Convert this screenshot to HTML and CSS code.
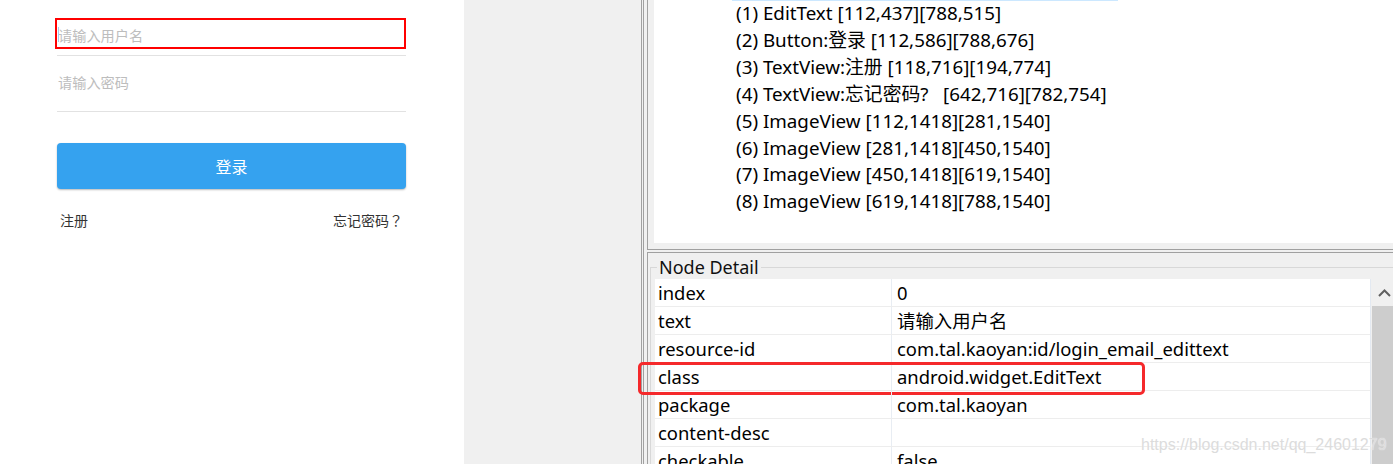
FILE: index.html
```html
<!DOCTYPE html>
<html lang="zh-CN">
<head>
<meta charset="utf-8">
<title>UI Automator Viewer</title>
<link rel="stylesheet" href="styles.css">
</head>
<body>
<div class="page">
  <section class="phone">
    <div class="form">
      <div class="field field-user">
        <span class="cursor"></span>
        <span class="ph">请输入用户名</span>
        <span class="hl-box"></span>
      </div>
      <div class="field field-pass"><span class="ph">请输入密码</span></div>
      <div class="btn">登录</div>
      <div class="links"><span>注册</span><span>忘记密码<span class="q" lang="ja">？</span></span></div>
    </div>
  </section>
  <div class="gap"></div>
  <section class="viewer">
    <div class="tree-pane">
      <div class="tree">
        <div class="sel-edge"></div>
        <ul class="nodes">
          <li>(1) EditText [112,437][788,515]</li>
          <li>(2) Button:登录 [112,586][788,676]</li>
          <li>(3) TextView:注册 [118,716][194,774]</li>
          <li>(4) TextView:忘记密码?   [642,716][782,754]</li>
          <li>(5) ImageView [112,1418][281,1540]</li>
          <li>(6) ImageView [281,1418][450,1540]</li>
          <li>(7) ImageView [450,1418][619,1540]</li>
          <li>(8) ImageView [619,1418][788,1540]</li>
        </ul>
      </div>
    </div>
    <div class="detail-pane">
      <div class="group">
        <span class="legend">Node Detail</span>
        <div class="table-wrap">
          <div class="table">
            <div class="row"><div class="k">index</div><div class="v">0</div></div>
            <div class="row"><div class="k">text</div><div class="v">请输入用户名</div></div>
            <div class="row"><div class="k">resource-id</div><div class="v">com.tal.kaoyan:id/login_email_edittext</div></div>
            <div class="row"><div class="k">class</div><div class="v">android.widget.EditText</div><span class="mark"></span></div>
            <div class="row"><div class="k">package</div><div class="v">com.tal.kaoyan</div></div>
            <div class="row"><div class="k">content-desc</div><div class="v"></div></div>
            <div class="row"><div class="k">checkable</div><div class="v">false</div></div>
          </div>
          <div class="scrollbar">
            <div class="arrow"><svg width="13" height="8" viewBox="0 0 13 8"><path d="M1 7 L6.5 1.5 L12 7" fill="none" stroke="#606060" stroke-width="2"/></svg></div>
            <div class="thumb"></div>
          </div>
        </div>
      </div>
    </div>
  </section>
  <div class="watermark">https://blog.csdn.net/qq_24601279</div>
</div>
</body>
</html>
```
FILE: styles.css
```css
* { box-sizing: border-box; }
html, body { margin: 0; padding: 0; }
body { width: 1393px; height: 464px; overflow: hidden; background: #f0f0f0; }

.page {
  position: relative;
  display: flex;
  width: 1393px;
  height: 464px;
  overflow: hidden;
}

/* ---------- phone screen ---------- */
.phone {
  width: 464px;
  flex: none;
  background: #fff;
  font-family: "Noto Sans CJK SC", "Noto Sans", sans-serif;
}
.form {
  margin-left: 57px;
  width: 349px;
}
.field {
  position: relative;
  border-bottom: 1px solid #e2e2e2;
}
.field .ph {
  display: block;
  font-size: 14.2px;
  line-height: 20px;
  color: #bdbdbd;
  padding-left: 1px;
}
.field-user { height: 56px; padding-top: 25px; }
.field-pass { height: 56px; padding-top: 16px; }
.cursor {
  position: absolute;
  left: 1px;
  top: 27px;
  width: 1px;
  height: 15px;
  background: #a8cdf0;
}
.hl-box {
  position: absolute;
  left: -2px;
  top: 18px;
  width: 351px;
  height: 31px;
  border: 2px solid #ff0000;
}
.btn {
  margin-top: 31px;
  height: 46px;
  border-radius: 4px;
  background: #35a2ef;
  box-shadow: 0 1px 2px rgba(0, 0, 0, 0.28);
  color: #fff;
  font-size: 16px;
  line-height: 46px;
  text-align: center;
}
.links {
  margin-top: 21px;
  display: flex;
  justify-content: space-between;
  padding: 0 3px 0 3px;
  font-size: 14px;
  line-height: 20px;
  color: #333;
}
.links .q { font-family: "Noto Sans CJK JP", sans-serif; }

.gap { width: 177px; flex: none; background: #f0f0f0; }

/* ---------- viewer ---------- */
.viewer {
  width: 752px;
  flex: none;
  display: flex;
  flex-direction: column;
  border-left: 3px double #a0a0a0;
  padding-left: 3px;
  background: #f0f0f0;
  font-family: "Noto Sans", "Noto Sans CJK SC", sans-serif;
  color: #000;
}
.tree-pane {
  height: 250px;
  flex: none;
  border-left: 1px solid #a0a0a0;
  border-bottom: 1px solid #a0a0a0;
  padding: 0 0 6px 6px;
}
.tree {
  height: 243px;
  background: #fff;
}
.sel-edge {
  margin-left: 78px;
  margin-bottom: -1px;
  width: 386px;
  height: 1px;
  background: #cce8ff;
}
.nodes {
  list-style: none;
  margin: 0;
  padding: 0 0 0 82px;
  font-size: 18.8px;
  line-height: 26.9px;
}
.nodes li { white-space: pre; }

.detail-pane {
  flex: 1;
  margin-top: 2px;
  border-top: 1px solid #a0a0a0;
  border-left: 1px solid #a0a0a0;
  padding: 14px 0 0 2px;
}
.group {
  position: relative;
  height: 100%;
  border-top: 1px solid #d8d8d8;
  border-left: 1px solid #d8d8d8;
  padding: 11px 0 0 4px;
}
.legend {
  position: absolute;
  left: 6px;
  top: -11px;
  padding: 0 2px;
  background: #f0f0f0;
  font-size: 18px;
  line-height: 20px;
  color: #111;
}
.table-wrap {
  display: flex;
  height: 100%;
}
.table {
  width: 716px;
  flex: none;
  background: #fff;
  border-right: 1px solid #e3e9f1;
  margin-right: 1px;
  font-size: 18.4px;
}
.row {
  position: relative;
  display: flex;
  height: 28px;
  border-bottom: 1px solid #ededed;
  line-height: 27px;
}
.k {
  width: 237px;
  flex: none;
  padding-left: 3px;
  border-right: 1px solid #e8edf3;
}
.v {
  flex: 1;
  padding-left: 5px;
  white-space: nowrap;
}
.mark {
  position: absolute;
  left: -17px;
  top: -1px;
  width: 507px;
  height: 33px;
  border: 3px solid #f5292b;
  border-radius: 5px;
}
.scrollbar {
  width: 21px;
  flex: none;
  display: flex;
  flex-direction: column;
  background: #f0f0f0;
}
.arrow {
  height: 27px;
  display: flex;
  align-items: center;
  justify-content: center;
  padding: 1px 0 0 3px;
}
.thumb {
  flex: 1;
  background: #cdcdcd;
}

.watermark {
  position: absolute;
  left: 1141px;
  top: 434px;
  font-family: "Liberation Sans", Arial, sans-serif;
  font-size: 16px;
  line-height: 22px;
  color: #dcdcdc;
  text-shadow: 0 0 1px rgba(255, 255, 255, 0.9);
  white-space: nowrap;
}
```
